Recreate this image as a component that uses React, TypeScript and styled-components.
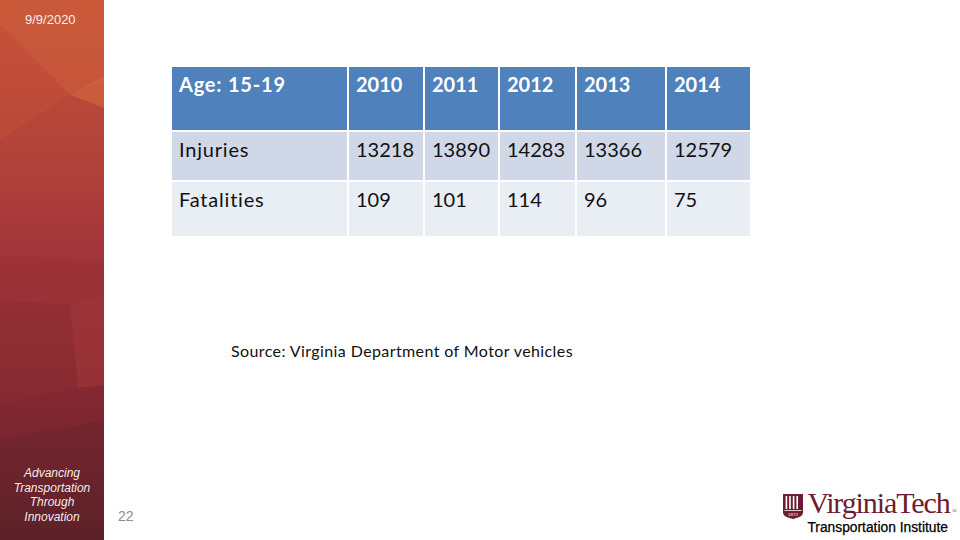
import React from 'react';
import styled, { createGlobalStyle } from 'styled-components';

const GlobalStyle = createGlobalStyle`
  html, body {
    margin: 0;
    padding: 0;
    background: #ffffff;
  }
  #root {
    width: 960px;
    height: 540px;
  }
`;

const Slide = styled.div`
  width: 960px;
  height: 540px;
  display: flex;
  overflow: hidden;
  background: #ffffff;
`;

const Sidebar = styled.aside`
  position: relative;
  width: 104px;
  flex: 0 0 104px;
  height: 100%;
  display: flex;
  flex-direction: column;
  justify-content: space-between;
  align-items: center;
  padding: 12px 0 16px;
  box-sizing: border-box;
  color: #ffffff;
  font-family: 'Liberation Sans', Arial, sans-serif;
`;

const Facets = styled.svg`
  position: absolute;
  inset: 0;
  width: 100%;
  height: 100%;
  z-index: 0;
`;

const DateText = styled.div`
  position: relative;
  z-index: 1;
  font-size: 13px;
  align-self: flex-start;
  margin-left: 25px;
  color: rgba(255, 255, 255, 0.92);
`;

const Tagline = styled.div`
  position: relative;
  z-index: 1;
  font-size: 12px;
  font-style: italic;
  line-height: 14.5px;
  text-align: center;
  color: rgba(255, 255, 255, 0.95);
`;

const Main = styled.main`
  flex: 1;
  display: flex;
  flex-direction: column;
  padding-top: 67px;
  font-family: 'Lato', 'Liberation Sans', sans-serif;
`;

const Table = styled.div`
  margin-left: 68px;
  display: grid;
  grid-template-columns: 175px 74px 73px 75px 88px 83px;
  grid-template-rows: 63px 48px 54px;
  gap: 2px;
  width: max-content;
`;

const Cell = styled.div<{ $row: number; $label?: boolean }>`
  box-sizing: border-box;
  padding: 5px 7px 0;
  font-size: 20px;
  line-height: 24px;
  white-space: nowrap;
  letter-spacing: ${p => (p.$label ? '0.8px' : '0')};
  color: ${p => (p.$row === 0 ? '#ffffff' : '#111111')};
  font-weight: ${p => (p.$row === 0 ? 700 : 400)};
  background: ${p => (p.$row === 0 ? '#4f81bd' : p.$row === 1 ? '#d0d8e8' : '#e9edf4')};
`;

const Source = styled.p`
  margin: 105px 0 0 127px;
  font-size: 16px;
  letter-spacing: 0.4px;
  color: #111111;
`;

const Footer = styled.footer`
  margin-top: auto;
  display: flex;
  align-items: flex-end;
  justify-content: space-between;
  padding: 0 3px 5px 14px;
`;

const PageNumber = styled.span`
  font-family: 'Liberation Sans', Arial, sans-serif;
  font-size: 14px;
  color: #8c8c8c;
  margin-bottom: 11px;
`;

const Logo = styled.div`
  display: flex;
  align-items: flex-start;
  gap: 4px;
  svg {
    margin-top: 5px;
  }
`;

const LogoText = styled.div`
  display: flex;
  flex-direction: column;
`;

const Wordmark = styled.div`
  font-family: 'Liberation Serif', 'Times New Roman', serif;
  font-size: 30px;
  line-height: 28px;
  letter-spacing: -1.1px;
  color: #6e1d30;
  sup {
    font-size: 7px;
    letter-spacing: 0;
    vertical-align: 0;
    margin-left: 2px;
    color: #555555;
  }
`;

const Institute = styled.div`
  font-family: 'Liberation Sans', Arial, sans-serif;
  font-size: 13.8px;
  line-height: 15px;
  color: #000000;
  -webkit-text-stroke: 0.25px #000000;
  margin-top: -5px;
`;

const headers = ['Age: 15-19', '2010', '2011', '2012', '2013', '2014'];
const rows = [
  ['Injuries', '13218', '13890', '14283', '13366', '12579'],
  ['Fatalities', '109', '101', '114', '96', '75'],
];

const Shield = () => (
  <svg width="20" height="25" viewBox="0 0 20 25">
    <path d="M0 0 H20 V18.5 Q20 23 10 25 Q0 23 0 18.5 Z" fill="#6e1d30" />
    {[2.6, 6.2, 9.8, 13.4].map(x => (
      <rect key={x} x={x} y="2" width="1.6" height="13" fill="#ffffff" />
    ))}
    <rect x="1.5" y="16.2" width="17" height="0.8" fill="#ffffff" />
    <text x="10" y="21.6" fontSize="4.4" fill="#ffffff" textAnchor="middle" fontFamily="Liberation Sans, sans-serif">
      1872
    </text>
  </svg>
);

const App: React.FC = () => (
  <>
    <GlobalStyle />
    <Slide>
      <Sidebar>
        <Facets viewBox="0 0 104 540" preserveAspectRatio="none">
          <defs>
            <linearGradient id="bg" x1="0" y1="0" x2="0" y2="1">
              <stop offset="0" stopColor="#c9573a" />
              <stop offset="0.25" stopColor="#b8473a" />
              <stop offset="0.45" stopColor="#a3363a" />
              <stop offset="0.7" stopColor="#8c2b33" />
              <stop offset="0.88" stopColor="#712430" />
              <stop offset="1" stopColor="#5a2127" />
            </linearGradient>
          </defs>
          <rect width="104" height="540" fill="url(#bg)" />
          <polygon points="0,0 104,0 104,80 70,95 0,25" fill="#cc5c3b" opacity="0.55" />
          <polygon points="70,95 104,75 104,108" fill="#d2663f" opacity="0.6" />
          <polygon points="0,25 70,95 0,140" fill="#c04e38" opacity="0.35" />
          <polygon points="0,140 70,95 104,108 104,170 0,165" fill="#b04238" opacity="0.35" />
          <polygon points="0,255 104,262 104,290 0,300" fill="#983136" opacity="0.35" />
          <polygon points="70,305 104,295 104,385 78,388" fill="#a0383a" opacity="0.5" />
          <polygon points="0,300 70,305 78,388 0,405" fill="#862a32" opacity="0.35" />
          <polygon points="0,405 78,388 104,385 104,420 0,440" fill="#7a2630" opacity="0.35" />
          <polygon points="0,440 104,420 104,540 0,540" fill="#62222a" opacity="0.4" />
        </Facets>
        <DateText>9/9/2020</DateText>
        <Tagline>
          Advancing
          <br />
          Transportation
          <br />
          Through
          <br />
          Innovation
        </Tagline>
      </Sidebar>
      <Main>
        <Table>
          {headers.map((h, j) => (
            <Cell key={h} $row={0} $label={j === 0}>
              {h}
            </Cell>
          ))}
          {rows.map((r, i) =>
            r.map((c, j) => (
              <Cell key={`${i}-${j}`} $row={i + 1} $label={j === 0}>
                {c}
              </Cell>
            ))
          )}
        </Table>
        <Source>Source: Virginia Department of Motor vehicles</Source>
        <Footer>
          <PageNumber>22</PageNumber>
          <Logo>
            <Shield />
            <LogoText>
              <Wordmark>
                VirginiaTech<sup>®</sup>
              </Wordmark>
              <Institute>Transportation Institute</Institute>
            </LogoText>
          </Logo>
        </Footer>
      </Main>
    </Slide>
  </>
);

export default App;
